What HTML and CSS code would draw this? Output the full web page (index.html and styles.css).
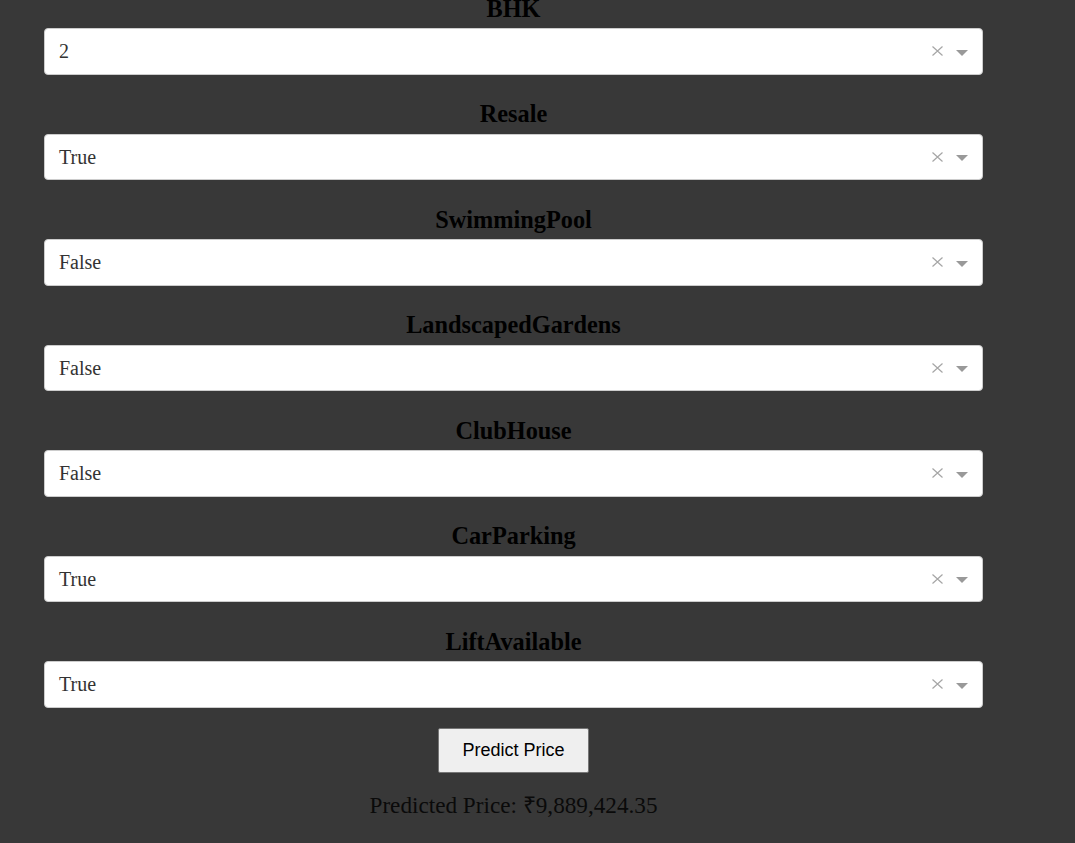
FILE: index.html
```html
<!DOCTYPE html>
<html lang="en">
<head>
<meta charset="utf-8">
<title>House Price Prediction</title>
<link rel="stylesheet" href="styles.css">
</head>
<body>
<div class="form">
  <div class="field">
    <label class="field-label">BHK</label>
    <div class="select">
      <span class="select-value">2</span>
      <span class="select-clear"><svg width="11" height="10" viewBox="0 0 11 10"><path d="M0.5 0.5 L10.5 9.5 M10.5 0.5 L0.5 9.5" stroke="#a6a6a6" stroke-width="1.2" fill="none"/></svg></span>
      <span class="select-arrow"></span>
    </div>
  </div>
  <div class="field">
    <label class="field-label">Resale</label>
    <div class="select">
      <span class="select-value">True</span>
      <span class="select-clear"><svg width="11" height="10" viewBox="0 0 11 10"><path d="M0.5 0.5 L10.5 9.5 M10.5 0.5 L0.5 9.5" stroke="#a6a6a6" stroke-width="1.2" fill="none"/></svg></span>
      <span class="select-arrow"></span>
    </div>
  </div>
  <div class="field">
    <label class="field-label">SwimmingPool</label>
    <div class="select">
      <span class="select-value">False</span>
      <span class="select-clear"><svg width="11" height="10" viewBox="0 0 11 10"><path d="M0.5 0.5 L10.5 9.5 M10.5 0.5 L0.5 9.5" stroke="#a6a6a6" stroke-width="1.2" fill="none"/></svg></span>
      <span class="select-arrow"></span>
    </div>
  </div>
  <div class="field">
    <label class="field-label">LandscapedGardens</label>
    <div class="select">
      <span class="select-value">False</span>
      <span class="select-clear"><svg width="11" height="10" viewBox="0 0 11 10"><path d="M0.5 0.5 L10.5 9.5 M10.5 0.5 L0.5 9.5" stroke="#a6a6a6" stroke-width="1.2" fill="none"/></svg></span>
      <span class="select-arrow"></span>
    </div>
  </div>
  <div class="field">
    <label class="field-label">ClubHouse</label>
    <div class="select">
      <span class="select-value">False</span>
      <span class="select-clear"><svg width="11" height="10" viewBox="0 0 11 10"><path d="M0.5 0.5 L10.5 9.5 M10.5 0.5 L0.5 9.5" stroke="#a6a6a6" stroke-width="1.2" fill="none"/></svg></span>
      <span class="select-arrow"></span>
    </div>
  </div>
  <div class="field">
    <label class="field-label">CarParking</label>
    <div class="select">
      <span class="select-value">True</span>
      <span class="select-clear"><svg width="11" height="10" viewBox="0 0 11 10"><path d="M0.5 0.5 L10.5 9.5 M10.5 0.5 L0.5 9.5" stroke="#a6a6a6" stroke-width="1.2" fill="none"/></svg></span>
      <span class="select-arrow"></span>
    </div>
  </div>
  <div class="field">
    <label class="field-label">LiftAvailable</label>
    <div class="select">
      <span class="select-value">True</span>
      <span class="select-clear"><svg width="11" height="10" viewBox="0 0 11 10"><path d="M0.5 0.5 L10.5 9.5 M10.5 0.5 L0.5 9.5" stroke="#a6a6a6" stroke-width="1.2" fill="none"/></svg></span>
      <span class="select-arrow"></span>
    </div>
  </div>
  <div class="actions">
    <button class="predict-btn" type="button">Predict Price</button>
  </div>
  <div class="result">Predicted Price: ₹9,889,424.35</div>
</div>
</body>
</html>
```

FILE: styles.css
```css
html, body {
  margin: 0;
  padding: 0;
  background: #383838;
}

body {
  font-family: "Liberation Serif", "Times New Roman", serif;
  color: #000;
  overflow: hidden;
}

.form {
  width: 939px;
  margin: -5.5px 0 0 44px;
}

.field {
  display: flex;
  flex-direction: column;
  margin-bottom: 25.5px;
}

.field-label {
  display: block;
  text-align: center;
  font-weight: bold;
  font-size: 24.3px;
  line-height: 28px;
  margin-bottom: 5.5px;
  color: #000;
}

.select {
  height: 46.5px;
  box-sizing: border-box;
  background: #fff;
  border: 1px solid #cccccc;
  border-radius: 4px;
  display: flex;
  align-items: center;
  padding: 0 14px 0 14px;
}

.select-value {
  flex: 1;
  font-size: 20px;
  color: #333;
  line-height: 24px;
}

.select-clear {
  display: flex;
  align-items: center;
  width: 11px;
  height: 10px;
  margin-right: 13px;
}

.select-clear svg {
  display: block;
}

.select-arrow {
  width: 0;
  height: 0;
  border-left: 6px solid transparent;
  border-right: 6px solid transparent;
  border-top: 6px solid #999;
  margin-top: 3px;
}

.actions {
  display: flex;
  justify-content: center;
  margin-top: -5.5px;
}

.predict-btn {
  font-family: "Liberation Sans", Arial, sans-serif;
  font-size: 18px;
  color: #000;
  background: #efefef;
  border: 1px solid #767676;
  border-radius: 2px;
  height: 45px;
  padding: 0 23px;
}

.result {
  text-align: center;
  font-size: 23.2px;
  line-height: 28px;
  color: #0a0a0a;
  margin-top: 18.5px;
}
```
